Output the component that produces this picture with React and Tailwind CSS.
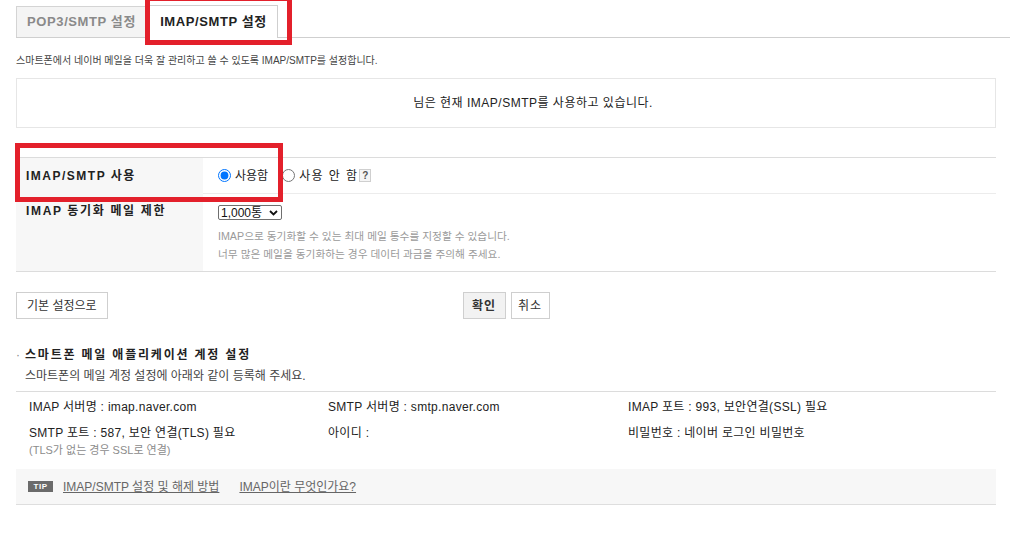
import React from "react";

const FONT = { fontFamily: '"Liberation Sans", "Noto Sans CJK KR", sans-serif' };

export default function App() {
  return (
    <div className="relative w-[1010px] h-[555px] overflow-hidden bg-white text-[#333]" style={FONT}>
      {/* Tabs */}
      <div className="ml-[16px] h-[38px] flex items-end border-b border-[#cfcfcf]">
        <div className="h-[31px] w-[131px] flex items-center justify-center border border-b-0 border-[#d4d4d4] bg-[#f4f4f4] text-[13px] font-bold tracking-[0.6px] text-[#8a8a8a]">
          POP3/SMTP 설정
        </div>
        <div className="ml-[2px] -mb-px h-[33px] w-[129px] flex items-center justify-center border border-b-0 border-[#cfcfcf] bg-white text-[13px] font-bold tracking-[0.6px] text-[#222]">
          IMAP/SMTP 설정
        </div>
      </div>

      <div className="ml-[16px] w-[980px]">
        <p className="mt-[16px] h-[14px] leading-[14px] text-[10px] text-[#444]">
          스마트폰에서 네이버 메일을 더욱 잘 관리하고 쓸 수 있도록 IMAP/SMTP를 설정합니다.
        </p>

        <div className="mt-[10px] h-[50px] border border-[#e6e6e6] flex items-center justify-center pl-[54px] text-[12px] tracking-[0.5px] text-[#222]">
          님은 현재 IMAP/SMTP를 사용하고 있습니다.
        </div>

        {/* Settings table */}
        <div className="mt-[29px] border-t border-b border-[#dcdcdc]">
          <div className="flex h-[35px]">
            <div className="w-[187px] bg-[#f7f7f7] pl-[10px] flex items-center text-[12px] font-bold tracking-[1.5px] text-[#222]">
              IMAP/SMTP 사용
            </div>
            <div className="flex-1 pl-[15px] flex items-center text-[12px] text-[#222]">
              <label className="flex items-center">
                <input type="radio" name="use" defaultChecked className="m-0 w-[13px] h-[13px]" />
                <span className="ml-[4px]">사용함</span>
              </label>
              <label className="flex items-center ml-[14px]">
                <input type="radio" name="use" className="m-0 w-[13px] h-[13px]" />
                <span className="ml-[4px] tracking-[1.4px]">사용 안 함</span>
              </label>
              <span className="ml-[1px] w-[12px] h-[13px] border border-[#cfcfcf] bg-[#f5f5f5] flex items-center justify-center text-[10px] font-bold text-[#555]">?</span>
            </div>
          </div>
          <div className="flex h-[78px]">
            <div className="w-[187px] bg-[#f7f7f7] pl-[10px] pt-[10px] text-[12px] font-bold tracking-[1.65px] text-[#222] leading-[16px]">
              IMAP 동기화 메일 제한
            </div>
            <div className="flex-1 border-t border-[#ececec] pl-[15px] pt-[11px]">
              <div className="w-[64px] h-[15px] border border-[#6f6f6f] rounded-[2px] flex items-center justify-between pl-[2px] pr-[3px] text-[12px] text-[#111] leading-none">
                <span>1,000통</span>
                <svg width="9" height="6" viewBox="0 0 9 6"><path d="M1 1l3.5 3.5L8 1" fill="none" stroke="#111" strokeWidth="1.8" /></svg>
              </div>
              <p className="mt-[7px] text-[10.7px] leading-[18px] text-[#9a9a9a]">
                IMAP으로 동기화할 수 있는 최대 메일 통수를 지정할 수 있습니다.
                <br />
                너무 많은 메일을 동기화하는 경우 데이터 과금을 주의해 주세요.
              </p>
            </div>
          </div>
        </div>

        {/* Buttons */}
        <div className="mt-[20px] grid grid-cols-[1fr_auto_1fr] items-center">
          <div>
            <button className="h-[27px] px-[10px] border border-[#cfcfcf] bg-white text-[12px] text-[#333]">기본 설정으로</button>
          </div>
          <div className="flex gap-[5px]">
            <button className="h-[27px] w-[43px] border border-[#cfcfcf] bg-[#f2f2f2] text-[12px] font-bold tracking-[1px] text-[#333]">확인</button>
            <button className="h-[27px] w-[39px] border border-[#cfcfcf] bg-white text-[12px] tracking-[1px] text-[#333]">취소</button>
          </div>
          <div />
        </div>

        {/* Smartphone section */}
        <div className="mt-[28px] h-[16px] flex items-center text-[12px] leading-[16px]">
          <span className="w-[9px] text-[#888]">·</span>
          <span className="font-bold tracking-[1.8px] text-[#222]">스마트폰 메일 애플리케이션 계정 설정</span>
        </div>
        <p className="mt-[5px] ml-[9px] h-[16px] leading-[16px] text-[12px] text-[#444]">
          스마트폰의 메일 계정 설정에 아래와 같이 등록해 주세요.
        </p>
        <div className="mt-[7px] h-px bg-[#dcdcdc]" />

        <div className="pt-[7px] pl-[13px] grid grid-cols-[299px_300px_1fr] text-[12px] tracking-[0.3px] text-[#222] leading-[16px]">
          <div>IMAP 서버명 : imap.naver.com</div>
          <div>SMTP 서버명 : smtp.naver.com</div>
          <div>IMAP 포트 : 993, 보안연결(SSL) 필요</div>
          <div className="mt-[10px]">
            SMTP 포트 : 587, 보안 연결(TLS) 필요
            <div className="mt-[2px] text-[11px] leading-[14px] tracking-normal text-[#8c8c8c]">(TLS가 없는 경우 SSL로 연결)</div>
          </div>
          <div className="mt-[10px]">아이디 :</div>
          <div className="mt-[10px]">비밀번호 : 네이버 로그인 비밀번호</div>
        </div>

        <div className="mt-[12px] h-[36px] bg-[#f7f7f7] border-b border-[#dedede] flex items-center pl-[12px] text-[12px] text-[#666]">
          <span className="w-[25px] h-[11px] bg-[#6b6b6b] text-white text-[8px] font-bold leading-[11px] flex items-center justify-center tracking-[0.5px]">TIP</span>
          <a className="ml-[10px] underline" href="#">IMAP/SMTP 설정 및 해제 방법</a>
          <a className="ml-[20px] underline" href="#">IMAP이란 무엇인가요?</a>
        </div>
      </div>

      {/* Red annotation boxes */}
      <div className="absolute left-[145px] top-[-4px] w-[147px] h-[49px] border-[5px] border-[#e3202b]" />
      <div className="absolute left-[15px] top-[143px] w-[268px] h-[59px] border-[5px] border-[#e3202b]" />
    </div>
  );
}
